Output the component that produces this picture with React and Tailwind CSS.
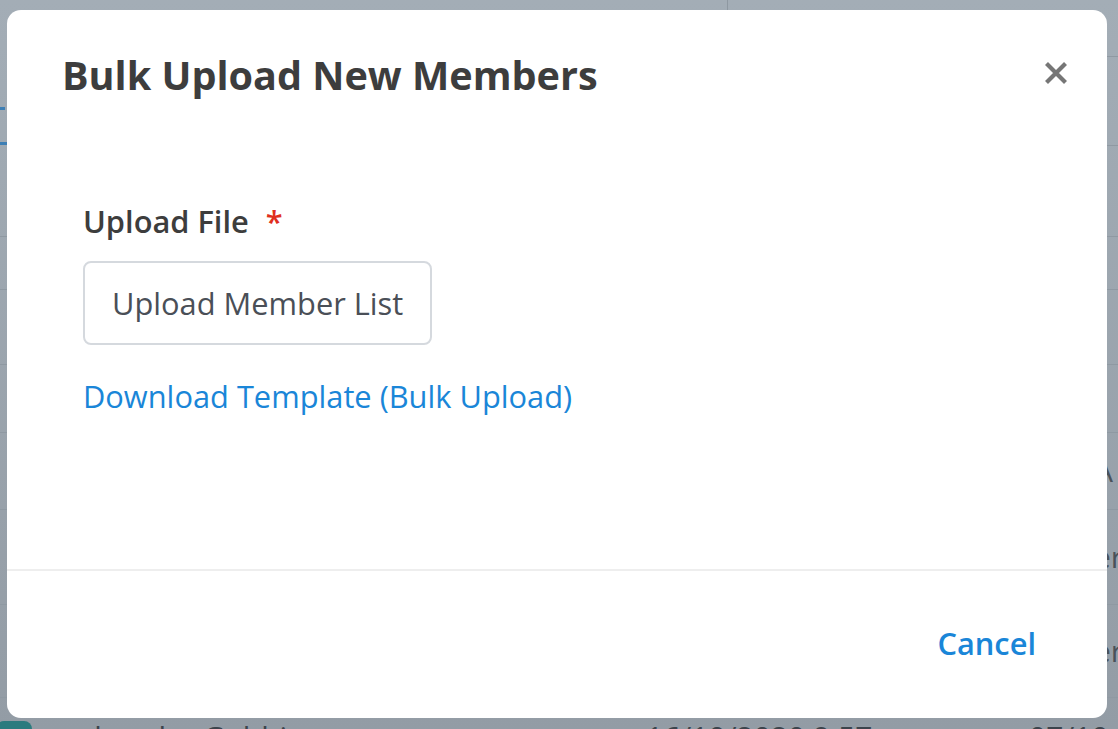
export default function App() {
  const rows = [
    { h: 53 },
    { h: 75 },
    { h: 68 },
    { h: 77, right: 'A' },
    { h: 95, right: 'er' },
    { h: 93, right: 'er' },
  ];

  return (
    <div
      className="relative w-[1118px] h-[729px] overflow-hidden bg-gradient-to-b from-[#a3adb6] to-[#939ca5]"
      style={{ fontFamily: '"Open Sans", "Liberation Sans", sans-serif' }}
    >
      {/* Page underneath the overlay */}
      <div className="flex flex-col">
        <div className="flex shrink-0 h-[237px] border-b border-[#8f99a2]">
          <div className="w-[727px] flex flex-col">
            <div className="text-[46px] font-semibold text-[#3c444c] leading-[50px] -ml-[20px] h-[57px]">r</div>
            <div className="mt-[50px] w-[5px] h-[3px] bg-[#3d7fb5]" />
            <div className="mt-[32px] w-[7px] h-[3px] bg-[#3d7fb5]" />
          </div>
          <div className="w-px h-[10px] bg-[#8e98a1]" />
          <div className="flex-1 flex flex-col">
            <div className="h-[57px] border-b border-[#8f99a2]" />
            <div className="h-[89px] border-b border-[#8f99a2]" />
          </div>
        </div>
        {rows.map((r, i) => (
          <div
            key={i}
            className="flex shrink-0 items-center justify-end border-b border-[#8f99a2] text-[30px] text-[#4a525a]"
            style={{ height: r.h }}
          >
            <span className="w-[24px] leading-none">{r.right || ''}</span>
          </div>
        ))}
        <div className="flex shrink-0 items-start pt-[24px]">
          <div className="w-[36px] h-[20px] rounded-[8px] bg-[#2b7b7e] -ml-[4px] -mt-[1px]" />
          <div className="text-[30px] text-[#3c444c] leading-none ml-[48px] w-[566px]">chandra Gobbi</div>
          <div className="text-[30px] text-[#3c444c] leading-none w-[383px]">16/10/2020 9:57</div>
          <div className="text-[30px] text-[#3c444c] leading-none">07/10</div>
        </div>
      </div>

      {/* Modal */}
      <div className="absolute left-[7px] top-[10px] w-[1100px] h-[708px] bg-white rounded-[14px] flex flex-col">
        <div className="flex items-start justify-between pl-[55px] pr-[38px] pt-[40px]">
          <h2 className="text-[39.6px] font-bold text-[#3d3d3d] leading-[50px]">Bulk Upload New Members</h2>
          <button className="mt-[10px] w-[26px] h-[26px] flex items-center justify-center">
            <svg width="24" height="24" viewBox="0 0 24 24">
              <path d="M2.5 2.5L21.5 21.5M21.5 2.5L2.5 21.5" stroke="#767676" strokeWidth="4.2" />
            </svg>
          </button>
        </div>

        <div className="flex-1 flex flex-col items-start pl-[76px] pt-[102px]">
          <label className="flex items-center text-[30.8px] font-semibold text-[#3d3d3d] leading-[38px]">
            Upload File
            <span className="ml-[17px] text-[#e0301e]">*</span>
          </label>
          <button className="mt-[21px] h-[84px] px-[27px] border-2 border-[#d5d9de] rounded-[8px] text-[30.8px] text-[#4a4f57] leading-none">
            Upload Member List
          </button>
          <a className="mt-[32px] text-[30.8px] text-[#1a86d8] leading-[38px]">Download Template (Bulk Upload)</a>
        </div>

        <div className="h-[2px] bg-[#eeeeee] mb-[53px]" />
        <div className="flex justify-end pr-[71px] pb-[56px]">
          <button className="text-[30.8px] font-semibold text-[#1a86d8] leading-[38px]">Cancel</button>
        </div>
      </div>
    </div>
  );
}
